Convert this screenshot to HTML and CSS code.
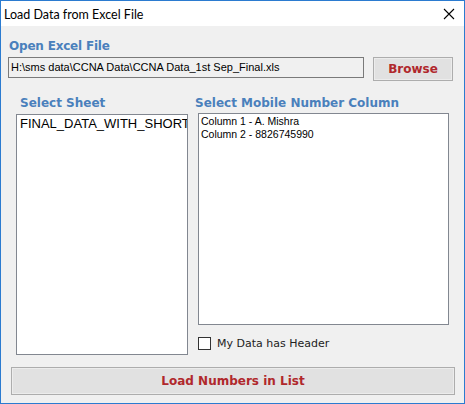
FILE: index.html
```html
<!DOCTYPE html>
<html>
<head>
<meta charset="utf-8">
<link rel="stylesheet" href="styles.css">
</head>
<body>
<div class="window">
  <div class="titlebar">
    <span class="title">Load Data from Excel File</span>
    <svg class="close" width="12" height="12" viewBox="0 0 12 12"><path d="M1 1 L11 11 M11 1 L1 11" stroke="#000" stroke-width="1.1" fill="none"/></svg>
  </div>
  <div class="content">
    <div class="label top-label">Open Excel File</div>
    <div class="path-row">
      <div class="textbox">H:\sms data\CCNA Data\CCNA Data_1st Sep_Final.xls</div>
      <button class="btn browse">Browse</button>
    </div>
    <div class="lists">
      <div class="col-left">
        <div class="label">Select Sheet</div>
        <div class="listbox sheet-list"><div class="sheet-item">FINAL_DATA_WITH_SHORTNAME</div></div>
      </div>
      <div class="col-right">
        <div class="label">Select Mobile Number Column</div>
        <div class="listbox col-list">
          <div class="col-item">Column 1 - A. Mishra</div>
          <div class="col-item">Column 2 - 8826745990</div>
        </div>
        <label class="check-row"><span class="checkbox"></span><span class="check-text">My Data has Header</span></label>
      </div>
    </div>
    <button class="btn load">Load Numbers in List</button>
  </div>
</div>
</body>
</html>
```
FILE: styles.css
```css
html, body {
  margin: 0;
  padding: 0;
  background: #f0f0f0;
}
.window {
  width: 465px;
  height: 404px;
  box-sizing: border-box;
  border: 1px solid #2b7bd0;
  display: flex;
  flex-direction: column;
  background: #f0f0f0;
  overflow: hidden;
}
.titlebar {
  height: 25px;
  background: #ffffff;
  display: flex;
  align-items: center;
  justify-content: space-between;
  padding: 0 9px 0 3px;
  flex: none;
}
.title {
  font-family: Lato, "Noto Sans", sans-serif;
  font-size: 12.5px;
  color: #000;
  position: relative;
  top: 1px;
}
.close {
  display: block;
  margin-top: 1px;
}
.content {
  flex: 1;
  padding: 12px 0 0 7px;
}
.label {
  font-family: "DejaVu Sans", Verdana, sans-serif;
  font-weight: bold;
  font-size: 12px;
  line-height: 16px;
  color: #4a80bc;
}
.top-label {
  margin-left: 1px;
  letter-spacing: -0.2px;
}
.path-row {
  display: flex;
  align-items: flex-start;
  margin-top: 3px;
}
.textbox {
  width: 356px;
  height: 21px;
  box-sizing: border-box;
  border: 1px solid #7a7a7a;
  background: #f0f0f0;
  font-family: "Liberation Sans", Arial, sans-serif;
  font-size: 11px;
  line-height: 19px;
  padding-left: 2px;
  color: #000;
  white-space: nowrap;
  overflow: hidden;
}
.btn {
  box-sizing: border-box;
  border: 1px solid #adadad;
  background: #e1e1e1;
  box-shadow: inset 0 0 0 1px #ececec;
  font-family: "DejaVu Sans", Verdana, sans-serif;
  font-weight: bold;
  font-size: 12px;
  color: #b0282c;
  padding: 0;
  margin: 0;
}
.browse {
  width: 80px;
  height: 24px;
  margin-left: 9px;
}
.lists {
  display: flex;
  margin-top: 14px;
  margin-left: 8px;
}
.col-left {
  width: 172px;
  flex: none;
}
.col-left .label {
  margin-left: 4px;
}
.listbox {
  box-sizing: border-box;
  border: 1px solid #828790;
  background: #ffffff;
  overflow: hidden;
}
.sheet-list {
  margin-top: 3px;
  height: 241px;
  padding: 1px 0 0 3px;
}
.sheet-item {
  font-family: "Liberation Sans", Arial, sans-serif;
  font-size: 13px;
  line-height: 15px;
  white-space: nowrap;
  color: #000;
}
.col-right {
  margin-left: 7px;
}
.col-list {
  margin-top: 2px;
  margin-left: 3px;
  width: 251px;
  height: 212px;
  padding: 1px 0 0 2px;
}
.col-item {
  font-family: "Liberation Sans", Arial, sans-serif;
  font-size: 10.5px;
  line-height: 13px;
  color: #000;
  white-space: nowrap;
}
.check-row {
  display: flex;
  align-items: center;
  margin-top: 12px;
  margin-left: 3px;
  height: 13px;
}
.checkbox {
  width: 13px;
  height: 13px;
  box-sizing: border-box;
  border: 1px solid #333333;
  background: #ffffff;
  flex: none;
}
.check-text {
  font-family: "DejaVu Sans", Verdana, sans-serif;
  font-size: 11px;
  color: #222;
  margin-left: 6px;
}
.load {
  display: block;
  width: 444px;
  height: 28px;
  margin-top: 12px;
  margin-left: 3px;
}
```
